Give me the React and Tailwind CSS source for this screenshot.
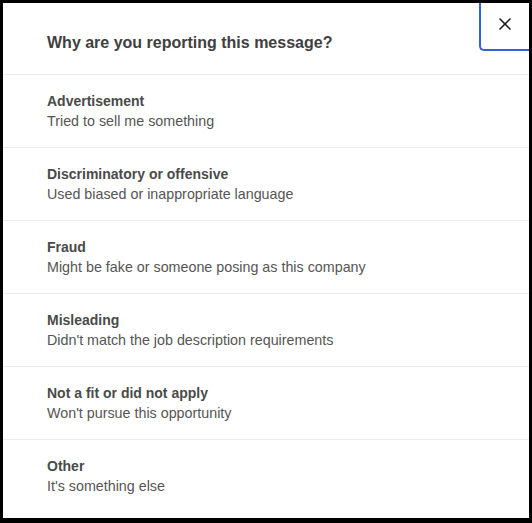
import React from "react";
import { X } from "lucide-react";

const reasons = [
  { title: "Advertisement", desc: "Tried to sell me something" },
  { title: "Discriminatory or offensive", desc: "Used biased or inappropriate language" },
  { title: "Fraud", desc: "Might be fake or someone posing as this company" },
  { title: "Misleading", desc: "Didn't match the job description requirements" },
  { title: "Not a fit or did not apply", desc: "Won't pursue this opportunity" },
  { title: "Other", desc: "It's something else" },
];

export default function App() {
  return (
    <div
      className="w-[532px] h-[523px] bg-black pt-[3px] pl-[3px] pr-[3px] pb-[5px]"
      style={{ fontFamily: '"Liberation Sans", Arial, sans-serif' }}
    >
      <div className="relative h-full bg-white overflow-hidden">
        <button
          type="button"
          className="absolute top-0 right-0 w-[50px] h-[48px] pb-[4px] flex items-center justify-center border-l-2 border-b-2 border-[#2f62d4] rounded-bl-[5px] text-[#1a1a1a]"
        >
          <X size={20} strokeWidth={1.9} />
        </button>

        <div className="pl-[44px] pt-[28px] pb-[19px] border-b border-[#ececec]">
          <h2 className="text-[16px] leading-6 font-bold text-[#404040]">
            Why are you reporting this message?
          </h2>
        </div>

        {reasons.map((r, i) => (
          <div
            key={r.title}
            className={`pl-[44px] py-4 ${i < reasons.length - 1 ? "border-b border-[#ececec]" : ""}`}
          >
            <div className="text-[14px] leading-5 font-bold text-[#4a4a4a]">{r.title}</div>
            <div className="text-[14.3px] leading-5 text-[#555555]">{r.desc}</div>
          </div>
        ))}
      </div>
    </div>
  );
}
